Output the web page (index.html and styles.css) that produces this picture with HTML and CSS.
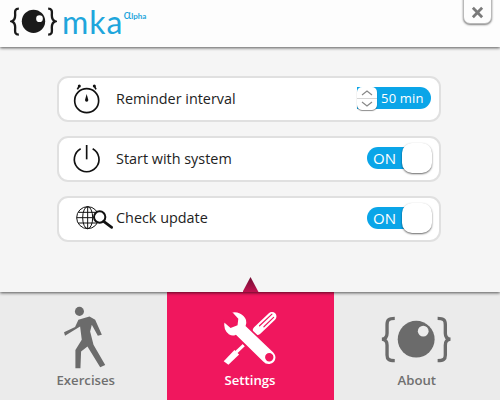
FILE: index.html
```html
<!DOCTYPE html>
<html lang="en">
<head>
<meta charset="utf-8">
<title>mka</title>
<link rel="stylesheet" href="styles.css">
</head>
<body>
<div class="app">
  <header class="header">
    <div class="logo">
      <svg class="logo-eye" viewBox="30 20 140 96">
        <path class="brace" d="M56 28C42 28 45 38 45 48C45 58 43 63 35 66C43 69 45 74 45 84C45 96 42 106 56 106"/>
        <path class="brace" d="M144 28C158 28 155 38 155 48C155 58 157 63 165 66C157 69 155 74 155 84C155 96 158 106 144 106"/>
        <circle cx="100" cy="66" r="35" fill="#1a1a1a"/>
        <circle cx="118" cy="58" r="10" fill="#fff"/>
      </svg>
      <span class="logo-name">mka</span>
      <span class="logo-tag"><span class="logo-alpha">α</span>lpha</span>
    </div>
    <button class="close" type="button">
      <svg viewBox="0 0 14 14" width="13" height="13"><path d="M2 2L12 12M12 2L2 12"/></svg>
    </button>
  </header>
  <main class="main">
    <div class="row">
      <span class="row-icon">
        <svg viewBox="66 27 132 120">
          <circle class="ln" cx="110" cy="92" r="36"/>
          <circle cx="88" cy="48" r="4.5" fill="#111"/>
          <circle cx="133" cy="48" r="4.5" fill="#111"/>
          <path class="ln" d="M82 58L88 48M138 58L133 48"/>
          <path d="M110 72L115 90A5 5 0 0 1 105 90Z" fill="#111"/>
        </svg>
      </span>
      <span class="row-label row-label-r1">Reminder interval</span>
      <div class="spinner">
        <span class="stepper">
          <svg viewBox="0 0 20 23">
            <path class="chev" d="M5 8L10 4L15 8M5 15L10 19L15 15"/>
            <path class="chev-sep" d="M0 11.5H20"/>
          </svg>
        </span>
        <span class="spinner-value">50 min</span>
      </div>
    </div>
    <div class="row">
      <span class="row-icon">
        <svg viewBox="66 207 132 120">
          <path class="ln" d="M92 236A37 37 0 1 0 128 236"/>
          <path class="ln" d="M110 225V268"/>
        </svg>
      </span>
      <span class="row-label row-label-r1">Start with system</span>
      <div class="toggle"><span class="toggle-on">ON</span><span class="knob"></span></div>
    </div>
    <div class="row">
      <span class="row-icon">
        <svg viewBox="66 387 132 120">
          <g class="thin">
            <circle cx="113" cy="443" r="33"/>
            <ellipse cx="113" cy="443" rx="15" ry="33"/>
            <path d="M113 410V476M80 443H146M85 427H141M85 459H141"/>
          </g>
          <circle cx="149" cy="441" r="17" fill="#fff" stroke="#111" stroke-width="6"/>
          <path d="M161 454L185 472" stroke="#111" stroke-width="8" stroke-linecap="round"/>
        </svg>
      </span>
      <span class="row-label row-label-up">Check update</span>
      <div class="toggle"><span class="toggle-on">ON</span><span class="knob"></span></div>
    </div>
  </main>
  <nav class="tabs">
    <a class="tab">
      <svg class="tab-icon" viewBox="180 100 140 200">
        <circle cx="238" cy="125" r="13.5" fill="#6b6b6b"/>
        <path fill="#6b6b6b" d="M235 150L268 140L285 150L305 195L293 198L275 165L270 185L280 225L315 285L300 292L262 230L243 245L241 295L226 295L226 240L245 210L240 170L195 198L192 187L225 172Z"/>
      </svg>
      <span class="tab-label tab-label-first">Exercises</span>
    </a>
    <a class="tab tab-active">
      <span class="pointer"></span>
      <svg class="tab-icon" viewBox="150 100 210 200">
        <path d="M320 140L276 182" stroke="#fff" stroke-width="27" stroke-linecap="round"/>
        <path d="M320 133L283 168M325 143L296 171" stroke="#f0175e" stroke-width="3.5" stroke-linecap="round"/>
        <path d="M236 226L208 252" stroke="#fff" stroke-width="9"/>
        <path d="M208 240L222 254L190 284L176 274Z" fill="#fff"/>
        <path fill="#fff" stroke="#f0175e" stroke-width="5" fill-rule="evenodd" d="M198 127C215 122 238 130 245 150C247 158 246 163 244 168L325 245C340 260 332 280 315 284C305 286 298 283 292 276L212 198C205 201 197 200 190 195C178 186 173 170 176 153L197 172L215 165L217 148ZM312 252A10 10 0 1 0 312 272A10 10 0 1 0 312 252Z"/>
      </svg>
      <span class="tab-label">Settings</span>
    </a>
    <a class="tab">
      <svg class="tab-icon" viewBox="130 100 235 200">
        <path class="brace-grey" d="M183 146C165 146 160 150 160 165V190C160 200 155 207 145 208C155 209 160 216 160 226V255C160 268 165 272 183 272"/>
        <path class="brace-grey" d="M311 146C329 146 334 150 334 165V190C334 200 339 207 349 208C339 209 334 216 334 226V255C334 268 329 272 311 272"/>
        <circle cx="247" cy="208" r="55" fill="#6b6b6b"/>
        <circle cx="268" cy="184" r="16" fill="#ececec"/>
      </svg>
      <span class="tab-label">About</span>
    </a>
  </nav>
</div>
</body>
</html>
```
FILE: styles.css
```css
* { box-sizing: border-box; }
html, body { margin: 0; padding: 0; }
body { font-family: "Open Sans", "Liberation Sans", sans-serif; }
.app { width: 500px; height: 400px; display: flex; flex-direction: column; overflow: hidden; background: #f5f5f5; }

.header { height: 47px; flex: none; background: #fdfdfd; position: relative; z-index: 2; box-shadow: 0 1px 3px rgba(0,0,0,.65); display: flex; align-items: flex-start; }
.logo { display: flex; align-items: flex-start; padding: 6px 0 0 10px; }
.logo-eye { width: 47px; height: 32px; flex: none; }
.brace { fill: none; stroke: #1a1a1a; stroke-width: 7; }
.logo-name { font-family: "Lato", sans-serif; font-weight: 400; font-size: 32px; line-height: 32px; color: #1fa6dc; margin-left: 5px; letter-spacing: 1px; }
.logo-tag { font-family: "Lato", sans-serif; font-weight: 700; font-size: 8px; line-height: 8px; color: #1fa6dc; margin-top: 4px; }
.logo-alpha { font-size: 13px; font-weight: 400; }

.close { position: absolute; top: -3px; right: 8px; width: 29px; height: 27px; padding: 3px 0 0; border: 1px solid #b9b9b9; border-radius: 0 0 7px 7px; background: #fdfdfd; box-shadow: 0 1px 2px rgba(0,0,0,.5); display: flex; align-items: center; justify-content: center; }
.close svg { display: block; }
.close path { stroke: #7a7a7a; stroke-width: 3; fill: none; }

.main { flex: 1; position: relative; z-index: 1; background: #f5f5f5; box-shadow: 0 1px 3px rgba(0,0,0,.65); padding: 29px 59px 0 57px; display: flex; flex-direction: column; gap: 14px; }
.row { height: 46px; background: #fff; border: 2px solid #e0e0e0; border-radius: 11px; padding-left: 13px; display: flex; align-items: center; position: relative; }
.row-icon { width: 44px; height: 40px; flex: none; }
.row-icon svg { display: block; width: 44px; height: 40px; }
.ln { fill: none; stroke: #111; stroke-width: 5; }
.thin { fill: none; stroke: #111; stroke-width: 3; }
.row-label { font-size: 14.4px; color: #222; }
.row-label-r1 { margin-top: -2px; }
.row-label-up { margin-top: -3px; }

.spinner { position: absolute; left: 298px; top: 9px; width: 74px; height: 22px; background: #0aa5e8; border-radius: 0 11px 11px 0; display: flex; align-items: center; }
.stepper { width: 20px; height: 23px; flex: none; background: #fff; border-radius: 5px; box-shadow: 0 1px 1px rgba(0,0,0,.45); }
.stepper svg { display: block; width: 20px; height: 23px; }
.chev { fill: none; stroke: #888; stroke-width: 1.2; }
.chev-sep { stroke: #d5d5d5; stroke-width: 1; }
.spinner-value { color: #fff; font-size: 13px; margin-left: 4px; letter-spacing: .2px; }

.toggle { position: absolute; left: 308px; top: 9px; width: 63px; height: 22px; background: #0aa5e8; border-radius: 11px; display: flex; align-items: center; }
.toggle-on { color: #fff; font-size: 15px; margin-left: 6px; }
.knob { position: absolute; right: -2px; top: -4px; width: 30px; height: 30px; background: #fff; border-radius: 10px; box-shadow: 0 1px 2px rgba(0,0,0,.6); }

.tabs { height: 108px; flex: none; display: flex; background: #ebebeb; }
.tab { flex: 1; display: flex; flex-direction: column; align-items: center; padding-top: 11px; position: relative; }
.tab-active { flex: none; width: 167px; background: #f0175e; }
.tab-icon { display: block; height: 67px; flex: none; }
.tab-label { font-size: 13.2px; font-weight: 600; line-height: 18px; margin-top: 1px; color: #707070; }
.tab-label-first { margin-left: 5px; }
.tab-active .tab-label { color: #fff; }
.brace-grey { fill: none; stroke: #6b6b6b; stroke-width: 10; }
.pointer { position: absolute; left: 76px; top: -15px; width: 16px; height: 15px; z-index: 3; background: linear-gradient(#6f0e33, #c0124f); clip-path: polygon(50% 0, 100% 100%, 0 100%); }
```
